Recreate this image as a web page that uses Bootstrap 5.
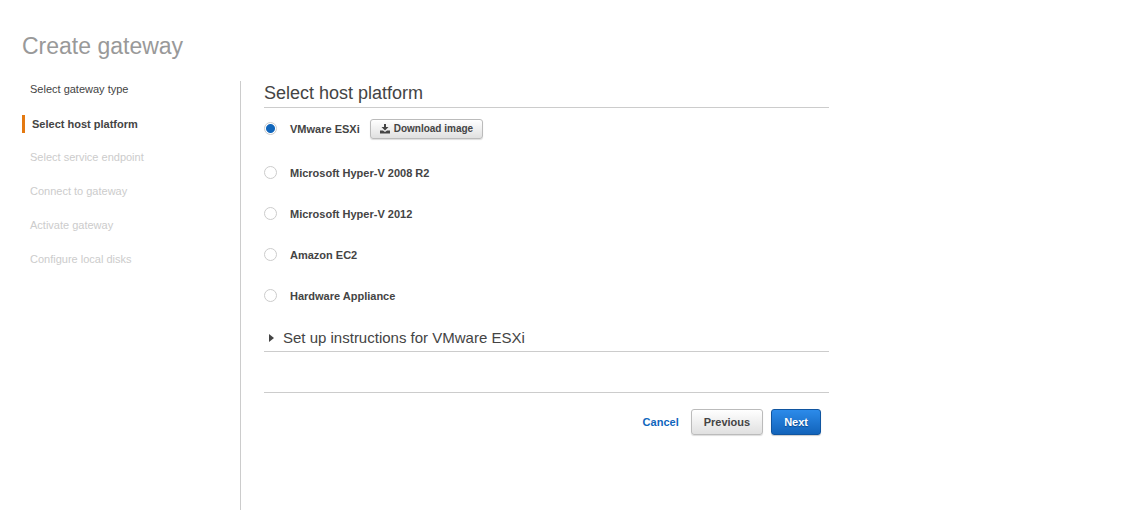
<!DOCTYPE html>
<html lang="en">
<head>
<meta charset="utf-8">
<meta name="viewport" content="width=device-width, initial-scale=1">
<title>Create gateway</title>
<link href="https://cdn.jsdelivr.net/npm/bootstrap@5.3.0/dist/css/bootstrap.min.css" rel="stylesheet">
<style>
  body { font-family: "Liberation Sans", Arial, sans-serif; font-size: 11px; line-height: 16px; color: #444; background: #fff; }
  .wizard { padding: 32px 22px 7px; min-height: 100vh; }
  .wizard-title { font-size: 23px; line-height: 28px; color: #999; font-weight: 400; margin-bottom: 21px; }
  .steps { width: 218px; }
  .steps a { color: inherit; text-decoration: none; }
  .steps li { height: 34px; padding-left: 8px; }
  .steps li.current { padding-left: 0; font-weight: 700; }
  .steps li.current a { display: block; border-left: 3px solid #e47911; padding-left: 7px; line-height: 18px; }
  .steps li.todo { color: #ccc; }
  .stage { border-left: 1px solid #ccc; padding-left: 23px; }
  .stage-body { max-width: 565px; }
  .rule { border-bottom: 1px solid #ccc; }
  .stage-title { font-size: 18px; line-height: 22px; font-weight: 400; padding: 1px 0 3px; margin-bottom: 11px; }
  .host { height: 20px; margin-bottom: 21px; }
  .host:first-of-type { margin-bottom: 24px; }
  .host label { font-weight: 700; }
  .host .form-check-input { width: 13px; height: 13px; margin: 0 13px 2px 0; border-color: #ccc; flex: none; }
  .host .form-check-input:checked { background: #fff radial-gradient(circle, #1166bb 4px, #fff 5px); border-color: #ccc; }
  .btn { --bs-btn-font-size: 11px; --bs-btn-line-height: 16px; --bs-btn-font-weight: 700; --bs-btn-border-radius: 3px; --bs-btn-padding-y: 4px; --bs-btn-padding-x: 12px; }
  .btn-plain { --bs-btn-color: #444; --bs-btn-border-color: #bbb; background: linear-gradient(#fff, #e0e0e0); box-shadow: 0 1px 1px #ddd; }
  .btn-next { --bs-btn-color: #fff; --bs-btn-border-color: #1055a0; background: linear-gradient(#2c8bea, #1263ba); box-shadow: 0 1px 1px #ccc; text-shadow: 0 1px 1px #0a4a8c; }
  .btn-download { --bs-btn-font-size: 10px; --bs-btn-padding-y: 1px; --bs-btn-padding-x: 9px; margin-left: 10px; }
  .setup { font-size: 15px; line-height: 20px; color: #444; padding: 1px 0 3px 5px; }
  .actions { border-top: 1px solid #ccc; margin-top: 40px; padding: 16px 8px; gap: 8px; }
  .cancel { color: #0f66bd; font-weight: 700; text-decoration: none; margin-right: 4px; }
</style>
</head>
<body>
<main class="wizard d-flex flex-column">
  <h1 class="wizard-title">Create gateway</h1>
  <div class="d-flex flex-grow-1">
    <nav class="steps flex-shrink-0" aria-label="Steps">
      <ol class="list-unstyled mb-0">
        <li><a href="#">Select gateway type</a></li>
        <li class="current"><a href="#" aria-current="step">Select host platform</a></li>
        <li class="todo">Select service endpoint</li>
        <li class="todo">Connect to gateway</li>
        <li class="todo">Activate gateway</li>
        <li class="todo">Configure local disks</li>
      </ol>
    </nav>
    <section class="stage flex-grow-1">
      <form class="stage-body">
        <h2 class="stage-title rule">Select host platform</h2>
        <div class="host d-flex align-items-center">
          <input class="form-check-input" type="radio" name="host" id="h1" checked>
          <label for="h1">VMware ESXi</label>
          <button type="button" class="btn btn-plain btn-download d-flex align-items-center">
            <svg class="me-1" width="10" height="10" viewBox="0 0 10 10" fill="currentColor" aria-hidden="true"><path d="M4 0h2v3h2.500L5 6.500 1.500 3H4zM0 6.500h3L5 8l2-1.500h3V9.500H0z"/></svg>
            Download image
          </button>
        </div>
        <div class="host d-flex align-items-center">
          <input class="form-check-input" type="radio" name="host" id="h2">
          <label for="h2">Microsoft Hyper-V 2008 R2</label>
        </div>
        <div class="host d-flex align-items-center">
          <input class="form-check-input" type="radio" name="host" id="h3">
          <label for="h3">Microsoft Hyper-V 2012</label>
        </div>
        <div class="host d-flex align-items-center">
          <input class="form-check-input" type="radio" name="host" id="h4">
          <label for="h4">Amazon EC2</label>
        </div>
        <div class="host d-flex align-items-center">
          <input class="form-check-input" type="radio" name="host" id="h5">
          <label for="h5">Hardware Appliance</label>
        </div>
        <button type="button" class="setup rule d-flex align-items-center w-100 bg-transparent border-top-0 border-start-0 border-end-0 text-start mt-1" aria-expanded="false">
          <svg class="me-2" width="6" height="8" viewBox="0 0 6 8" fill="currentColor" aria-hidden="true"><path d="M0 0l5 4-5 4z"/></svg>
          Set up instructions for VMware ESXi
        </button>
        <div class="actions d-flex justify-content-end align-items-center">
          <a class="cancel" href="#">Cancel</a>
          <button type="button" class="btn btn-plain">Previous</button>
          <button type="submit" class="btn btn-next">Next</button>
        </div>
      </form>
    </section>
  </div>
</main>
<script src="https://cdn.jsdelivr.net/npm/bootstrap@5.3.0/dist/js/bootstrap.bundle.min.js"></script>
</body>
</html>
